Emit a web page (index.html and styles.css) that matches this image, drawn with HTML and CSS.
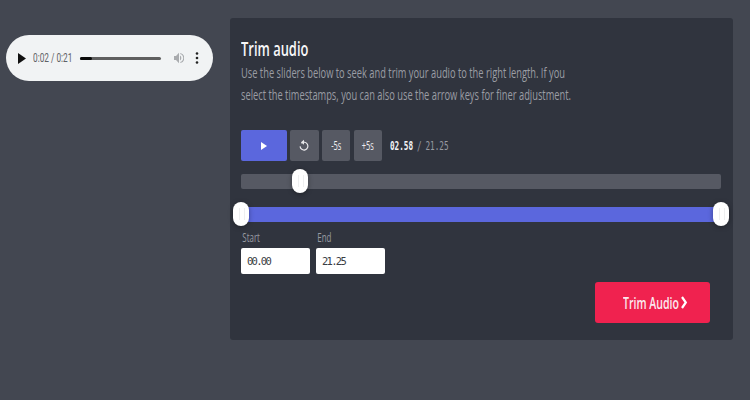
FILE: index.html
```html
<!DOCTYPE html>
<html lang="en">
<head>
<meta charset="utf-8">
<title>Trim audio</title>
<link rel="stylesheet" href="styles.css">
</head>
<body>
<div class="page">
  <aside class="side">
    <div class="player">
      <svg class="pl-play" width="8" height="11" viewBox="0 0 8 11"><path d="M0 0 8 5.5 0 11z" fill="#111"/></svg>
      <span class="pl-time">0:02 / 0:21</span>
      <div class="pl-track"><div class="pl-fill"></div></div>
      <svg class="pl-vol" width="10" height="12" viewBox="0 0 10 12"><path d="M0 4h2L5 .8v10.400L2 8H0z" fill="#a9abae"/><path d="M6 3.500a3 3 0 0 1 0 5z M6.500 1a5.200 5.200 0 0 1 0 10l-.3-.9a4.300 4.300 0 0 0 0-8.200z" fill="#a9abae"/></svg>
      <svg class="pl-more" width="4" height="12" viewBox="0 0 4 12"><circle cx="2" cy="1.500" r="1.300" fill="#222"/><circle cx="2" cy="6" r="1.300" fill="#222"/><circle cx="2" cy="10.500" r="1.300" fill="#222"/></svg>
    </div>
  </aside>
  <main class="panel">
    <h1 class="title">Trim audio</h1>
    <p class="desc">Use the sliders below to seek and trim your audio to the right length. If you<br>select the timestamps, you can also use the arrow keys for finer adjustment.</p>
    <div class="controls">
      <button class="btn btn-play"><svg width="6" height="8" viewBox="0 0 6 8"><path d="M0 0 6 4 0 8z" fill="#fff"/></svg></button>
      <button class="btn btn-icon"><svg width="10" height="14" viewBox="0 0 10 14"><path d="M2.400 4.200A3.900 3.900 0 1 1 1.100 7.400" fill="none" stroke="#e8e8ea" stroke-width="1.200"/><path d="M5 .8v5L2 3.300z" fill="#e8e8ea"/></svg></button>
      <button class="btn btn-icon"><span class="btn-text">-5s</span></button>
      <button class="btn btn-icon"><span class="btn-text">+5s</span></button>
      <div class="time"><span class="time-now">02.58</span><span class="time-sep">/</span><span>21.25</span></div>
    </div>
    <div class="slider seek"><span class="thumb thumb-seek"></span></div>
    <div class="slider range"><span class="thumb thumb-start"></span><span class="thumb thumb-end"></span></div>
    <div class="fields">
      <label class="field"><span class="field-label">Start</span><input class="field-input" value="00.00"></label>
      <label class="field"><span class="field-label">End</span><input class="field-input" value="21.25"></label>
    </div>
    <div class="actions">
      <button class="submit"><span class="submit-text">Trim Audio</span><svg class="submit-icon" width="7" height="13" viewBox="0 0 7 13"><path d="M1 1 4.800 6.500 1 12" fill="none" stroke="#fff" stroke-width="2.200"/></svg></button>
    </div>
  </main>
</div>
</body>
</html>
```
FILE: styles.css
```css
* { box-sizing: border-box; }
html, body { margin: 0; height: 100%; }
body { background: #434751; font-family: "Open Sans", "Noto Sans", sans-serif; overflow: hidden; }
.page { display: flex; align-items: flex-start; padding: 18px 17px 0 6px; gap: 17px; }
.side { width: 207px; flex: none; padding-top: 17px; }
.player { height: 46px; border-radius: 23px; background: #f1f3f4; display: flex; align-items: center; padding-left: 12px; }
.pl-play { flex: none; }
.pl-time { width: 49px; margin-left: 6.500px; font: 12.500px/1 Roboto, sans-serif; white-space: nowrap; color: #5f6266; transform: scaleX(.66); transform-origin: left center; flex: none; }
.pl-track { width: 81px; height: 3px; margin-left: -1.500px; background: #5f5f5f; border-radius: 2px; flex: none; }
.pl-fill { width: 12px; height: 100%; background: #0a0a0a; border-radius: 2px; }
.pl-vol { margin-left: 13px; flex: none; }
.pl-more { margin-left: 11px; flex: none; }
.panel { width: 503px; height: 322px; flex: none; background: #30343e; border-radius: 3px; padding: 20px 12px 0 11px; }
.title { margin: 0; font-size: 19px; line-height: 22px; font-weight: 600; color: #f7f7f9; transform: scaleX(.68); transform-origin: left center; white-space: nowrap; }
.desc { margin: 2px 0 0; font-size: 14px; line-height: 22px; color: #9a9da4; white-space: nowrap; transform: scaleX(.665); transform-origin: left center; }
.controls { display: flex; align-items: center; gap: 3.300px; margin-top: 24px; }
.btn { height: 31px; border: 0; border-radius: 2px; padding: 0; display: flex; align-items: center; justify-content: center; color: #eeeef0; font: 12px "Open Sans", sans-serif; flex: none; }
.btn-text { transform: scaleX(.62); }
.btn-play { width: 46px; background: #5b67dd; }
.btn-icon { width: 28.400px; background: #565963; }
.time { margin-left: 4.700px; font: 12px "DejaVu Sans Mono", monospace; color: #989ba2; display: flex; gap: 6px; transform: scaleX(.64); transform-origin: left center; }
.time-now { color: #f2f3f5; font-weight: 700; }
.slider { position: relative; height: 15px; border-radius: 2px; }
.seek { margin-top: 13px; background: #565963; }
.range { margin-top: 18px; background: #5b67dd; }
.thumb { position: absolute; top: -5px; width: 16px; height: 24px; border-radius: 8px; background: #fff; box-shadow: 0 1px 5px rgba(0,0,0,.35); }
.thumb::after { content: ""; position: absolute; left: 6px; top: 6px; width: 4px; height: 12px; border-left: 1px solid #eeeff0; border-right: 1px solid #eeeff0; }
.thumb-seek { left: 51px; }
.thumb-start { left: -8px; }
.thumb-end { right: -8px; }
.fields { display: flex; gap: 6px; margin-top: 10px; }
.field { display: flex; flex-direction: column; width: 69px; }
.field-label { font-size: 12px; line-height: 12px; color: #989ba2; padding-left: 2px; white-space: nowrap; transform: scaleX(.66); transform-origin: left center; }
.field-input { width: 69px; height: 26px; margin-top: 4px; border: 0; border-radius: 2px; background: #fff; padding: 0 6px; font: 10.500px "DejaVu Sans Mono", monospace; letter-spacing: -1.700px; color: #3a3d45; }
.actions { display: flex; justify-content: flex-end; margin-top: 8px; padding-right: 11px; }
.submit { width: 115px; height: 41px; border: 0; border-radius: 3px; background: #f0224f; padding: 0 0 0 28px; display: flex; align-items: center; }
.submit-text { width: 57px; flex: none; font: 600 16px "Open Sans", sans-serif; color: #fbe9ee; white-space: nowrap; transform: scaleX(.66); transform-origin: left center; text-align: left; }
.submit-icon { margin-left: 1px; }
```
